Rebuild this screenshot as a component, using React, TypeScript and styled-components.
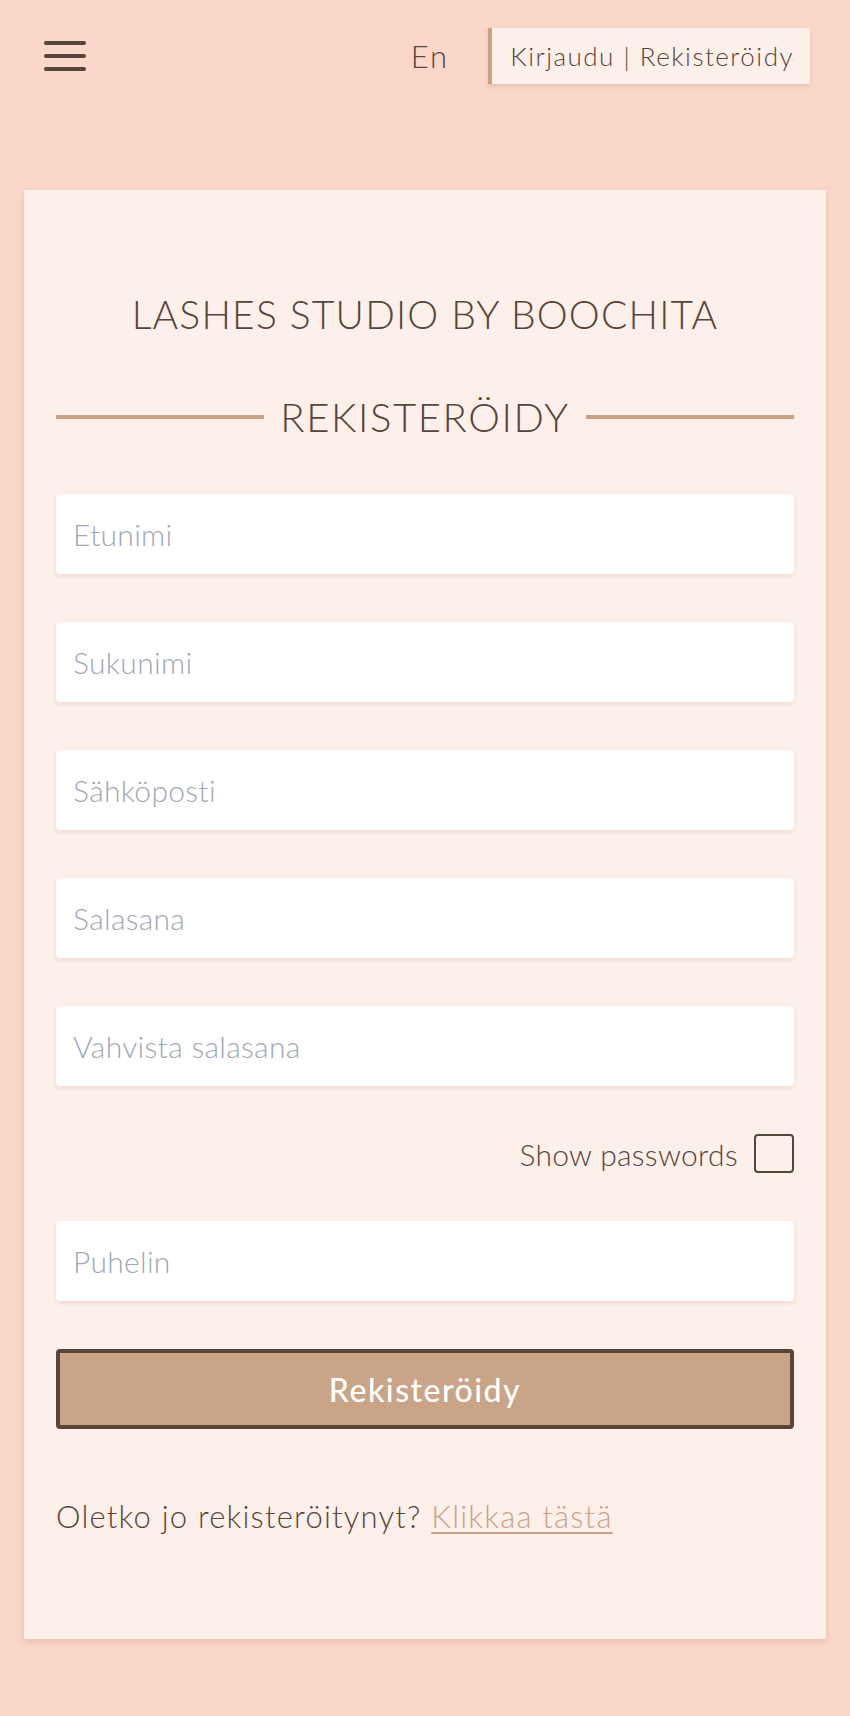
import React from "react";
import styled, { createGlobalStyle } from "styled-components";

const GlobalStyle = createGlobalStyle`
  html, body {
    margin: 0;
    padding: 0;
    background: #fad7c9;
  }
  body {
    font-family: "Lato", "Open Sans", sans-serif;
    color: #574539;
  }
  * { box-sizing: border-box; }
`;

const Page = styled.div`
  min-height: 1716px;
  background: #fad7c9;
  padding-bottom: 79px;
`;

const Header = styled.header`
  display: flex;
  align-items: center;
  justify-content: space-between;
  padding: 28px 40px 0 44px;
  height: 84px;
`;

const Burger = styled.button`
  width: 42px;
  height: 30px;
  padding: 0;
  border: none;
  background: transparent;
  display: flex;
  flex-direction: column;
  justify-content: space-between;
  cursor: pointer;
`;

const BurgerLine = styled.span`
  display: block;
  height: 4px;
  width: 100%;
  border-radius: 2px;
  background: #574539;
`;

const HeaderRight = styled.div`
  display: flex;
  align-items: center;
  gap: 39px;
`;

const Lang = styled.span`
  font-size: 31px;
  font-weight: 300;
  letter-spacing: 2px;
  color: #574539;
`;

const AuthLink = styled.a`
  display: flex;
  align-items: center;
  height: 56px;
  padding: 0 16px 0 18px;
  background: #fdefea;
  border-left: 4px solid #c9a285;
  box-shadow: 0 2px 4px rgba(140, 90, 70, 0.2);
  font-size: 26px;
  font-weight: 300;
  letter-spacing: 1.5px;
  color: #574539;
  text-decoration: none;
`;

const Card = styled.main`
  margin: 106px 24px 0;
  background: #fdefea;
  padding: 100px 32px 100px;
  box-shadow: 0 3px 6px rgba(180, 120, 100, 0.25);
`;

const BrandTitle = styled.h1`
  margin: 0;
  text-align: center;
  font-size: 39px;
  line-height: 48px;
  font-weight: 300;
  letter-spacing: 1.2px;
  color: #574539;
`;

const Divider = styled.div`
  display: flex;
  align-items: center;
  gap: 16px;
  margin-top: 55px;
`;

const DividerLine = styled.span`
  flex: 1;
  height: 4px;
  background: #c9a285;
`;

const SectionTitle = styled.h2`
  margin: 0;
  font-size: 40px;
  line-height: 48px;
  font-weight: 300;
  letter-spacing: 1.6px;
  color: #574539;
`;

const Form = styled.form`
  display: flex;
  flex-direction: column;
  gap: 48px;
  margin-top: 53px;
`;

const Field = styled.input`
  width: 100%;
  height: 80px;
  padding: 0 17px;
  border: none;
  border-radius: 4px;
  background: #ffffff;
  box-shadow: 0 2px 4px rgba(150, 100, 80, 0.15);
  font-family: "Lato", sans-serif;
  font-size: 30px;
  font-weight: 300;
  letter-spacing: 0.3px;
  color: #574539;
  outline: none;
  &::placeholder {
    color: #a1a8b5;
  }
`;

const CheckRow = styled.label`
  display: flex;
  justify-content: flex-end;
  align-items: center;
  gap: 16px;
  font-size: 30px;
  font-weight: 300;
  letter-spacing: 0.3px;
  color: #574539;
  cursor: pointer;
`;

const CheckBox = styled.span`
  width: 40px;
  height: 39px;
  border: 2px solid #574539;
  border-radius: 4px;
  background: #fdefea;
`;

const Submit = styled.button`
  width: 100%;
  height: 80px;
  background: #c9a487;
  border: 4px solid #574539;
  border-radius: 4px;
  color: #ffffff;
  font-family: "Lato", sans-serif;
  font-size: 32px;
  font-weight: 500;
  letter-spacing: 1.5px;
  cursor: pointer;
`;

const Footer = styled.p`
  margin: 65px 0 0;
  font-size: 31px;
  line-height: 45px;
  font-weight: 300;
  letter-spacing: 1.2px;
  color: #574539;
`;

const FooterLink = styled.a`
  color: #c9a285;
  text-decoration: underline;
  text-underline-offset: 4px;
  text-decoration-thickness: 2px;
`;

const fields = [
  { name: "firstName", placeholder: "Etunimi", type: "text" },
  { name: "lastName", placeholder: "Sukunimi", type: "text" },
  { name: "email", placeholder: "Sähköposti", type: "email" },
  { name: "password", placeholder: "Salasana", type: "password" },
  { name: "confirm", placeholder: "Vahvista salasana", type: "password" },
];

export default function App() {
  return (
    <Page>
      <GlobalStyle />
      <Header>
        <Burger aria-label="menu">
          <BurgerLine />
          <BurgerLine />
          <BurgerLine />
        </Burger>
        <HeaderRight>
          <Lang>En</Lang>
          <AuthLink href="#">Kirjaudu | Rekisteröidy</AuthLink>
        </HeaderRight>
      </Header>
      <Card>
        <BrandTitle>LASHES STUDIO BY BOOCHITA</BrandTitle>
        <Divider>
          <DividerLine />
          <SectionTitle>REKISTERÖIDY</SectionTitle>
          <DividerLine />
        </Divider>
        <Form onSubmit={(e) => e.preventDefault()}>
          {fields.map((f) => (
            <Field key={f.name} name={f.name} type={f.type} placeholder={f.placeholder} />
          ))}
          <CheckRow>
            Show passwords
            <CheckBox />
          </CheckRow>
          <Field name="phone" type="tel" placeholder="Puhelin" />
          <Submit type="submit">Rekisteröidy</Submit>
        </Form>
        <Footer>
          Oletko jo rekisteröitynyt? <FooterLink href="#">Klikkaa tästä</FooterLink>
        </Footer>
      </Card>
    </Page>
  );
}
